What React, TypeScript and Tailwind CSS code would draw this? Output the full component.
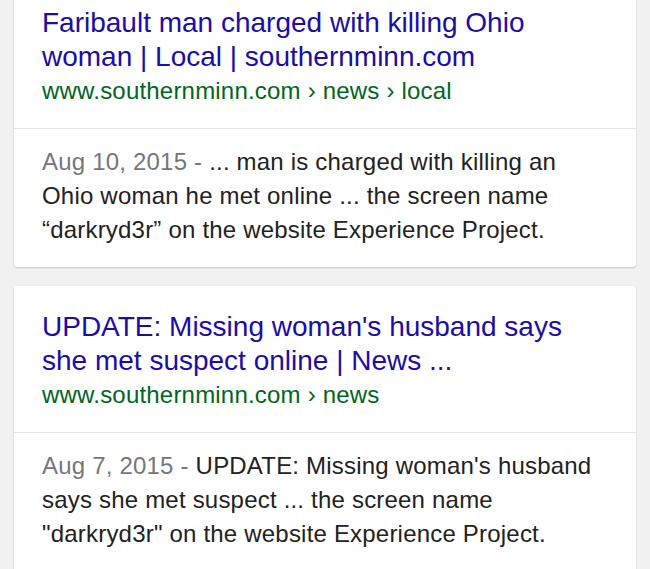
const results = [
  {
    title: "Faribault man charged with killing Ohio woman | Local | southernminn.com",
    url: "www.southernminn.com › news › local",
    date: "Aug 10, 2015",
    snippet: "... man is charged with killing an Ohio woman he met online ... the screen name “darkryd3r” on the website Experience Project.",
  },
  {
    title: "UPDATE: Missing woman's husband says she met suspect online | News ...",
    url: "www.southernminn.com › news",
    date: "Aug 7, 2015",
    snippet: "UPDATE: Missing woman's husband says she met suspect ... the screen name \"darkryd3r\" on the website Experience Project.",
  },
];

export default function App() {
  return (
    <div
      className="h-[569px] w-[650px] overflow-hidden bg-[#f1f1f1]"
      style={{ fontFamily: '"Liberation Sans", Arial, sans-serif' }}
    >
      <div className="-mt-[18px] flex flex-col gap-[19px] px-[14px]">
        {results.map((r) => (
          <div key={r.date} className="rounded-[3px] bg-white shadow-[0_1px_2px_rgba(0,0,0,0.18)]">
            <div className="pl-[28px] pr-[32px] pt-[24px] pb-[20px]">
              <div className="text-[28px] leading-[34px] text-[#1a0dab]">{r.title}</div>
              <div className="text-[24px] leading-[34px] tracking-[0.2px] text-[#006621]">{r.url}</div>
            </div>
            <div className="border-t border-[#e6e6e6] pl-[28px] pr-[32px] pt-[16px] pb-[20px] text-[24px] leading-[34px] tracking-[0.2px] text-[#222]">
              <span className="text-[#777]">{r.date} - </span>
              {r.snippet}
            </div>
          </div>
        ))}
      </div>
    </div>
  );
}
